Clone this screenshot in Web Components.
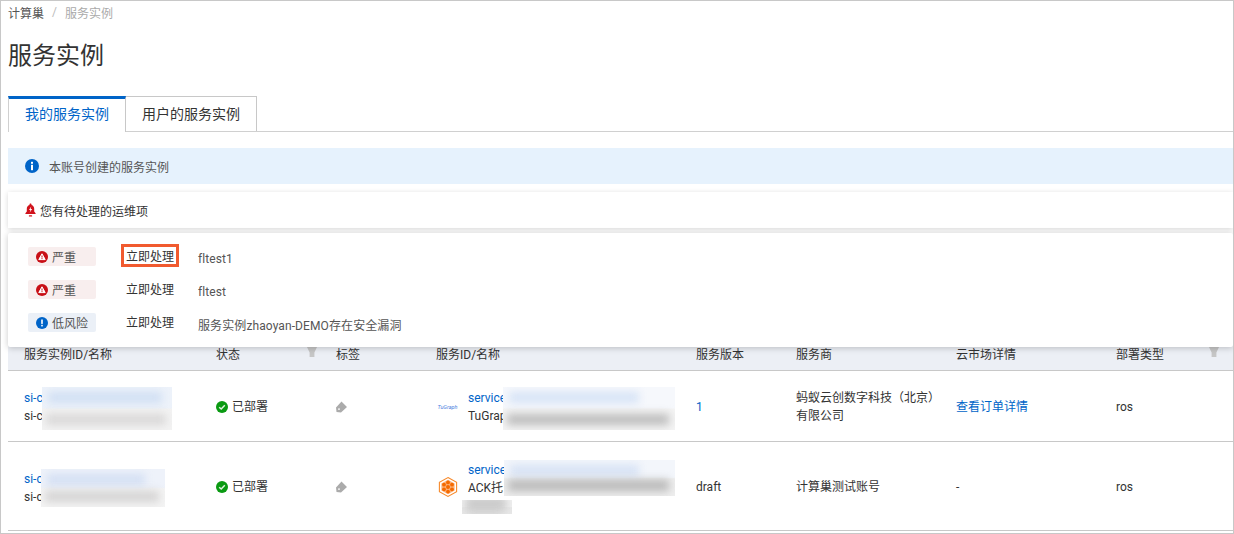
<!DOCTYPE html>
<html lang="zh">
<head>
<meta charset="utf-8">
<title>服务实例</title>
<style>
  html, body { margin: 0; padding: 0; background: #fff; height: 100%; overflow: hidden; }
  body {
    font-family: Roboto, "Noto Sans CJK SC", sans-serif;
    font-size: 12px;
    color: #333;
  }
</style>
</head>
<body>
<console-page>
  <crumb-nav slot="head"><span>计算巢</span></crumb-nav>
  <page-title slot="head">服务实例</page-title>
  <tab-strip slot="head"></tab-strip>
  <info-banner slot="head">本账号创建的服务实例</info-banner>
  <ops-bar slot="head">您有待处理的运维项</ops-bar>
  <ops-panel slot="over">
    <ops-row level="high" boxed>fltest1</ops-row>
    <ops-row level="high">fltest</ops-row>
    <ops-row level="low">服务实例zhaoyan-DEMO存在安全漏洞</ops-row>
  </ops-panel>
  <instance-table></instance-table>
</console-page>

<script>
const ICONS = {
  info: '<svg width="14" height="14" viewBox="0 0 14 14"><circle cx="7" cy="7" r="7" fill="#0064c8"/><rect x="6" y="2.8" width="2" height="2" fill="#fff"/><rect x="6" y="5.8" width="2" height="5.4" fill="#fff"/></svg>',
  bell: '<svg width="11" height="14" viewBox="0 0 11 14"><path d="M5.5 0.6c.6 0 1 .4 1 1v.3c1.8.5 2.7 2 2.7 3.9v2.7l1.4 1.8v.8H.4v-.8l1.4-1.8V5.8c0-1.9.9-3.4 2.7-3.9v-.3c0-.6.4-1 1-1z" fill="#d0121b"/><path d="M6.2 3.6 4 7h1.4l-.7 2.6L7.2 6H5.7z" fill="#fff"/><rect x="3.8" y="12.2" width="3.4" height="1.4" rx=".7" fill="#d0121b"/></svg>',
  severe: '<svg width="12" height="12" viewBox="0 0 12 12"><circle cx="6" cy="6" r="6" fill="#c80f16"/><path d="M6 2.8 9.2 8.6H2.8z" fill="#fff" stroke="#fff" stroke-linejoin="round"/><rect x="5.5" y="4.6" width="1" height="2" fill="#c80f16"/><rect x="5.5" y="7.1" width="1" height="1" fill="#c80f16"/></svg>',
  low: '<svg width="12" height="12" viewBox="0 0 12 12"><circle cx="6" cy="6" r="6" fill="#0064c8"/><rect x="5.2" y="2.5" width="1.6" height="4.4" fill="#fff"/><rect x="5.2" y="7.8" width="1.6" height="1.6" fill="#fff"/></svg>',
  ok: '<svg width="12" height="12" viewBox="0 0 12 12"><circle cx="6" cy="6" r="6" fill="#0a9a12"/><path d="M3.2 6.2 5.2 8 8.8 4.3" fill="none" stroke="#dff3e0" stroke-width="1.5"/></svg>',
  filter: '<svg width="10" height="10" viewBox="0 0 10 10"><path d="M0 0h10L7.4 5.4V10H2.6V5.4z" fill="#c6c6c6"/></svg>',
  tag: '<svg width="12" height="12" viewBox="0 0 12 12"><path fill-rule="evenodd" d="M0 6.5 5.5.5 11 6 5 11.5 .5 11zM3 7.2a.9.9 0 1 0 0 1.8.9.9 0 0 0 0-1.8z" fill="#ababab"/></svg>',
  hex: '<svg width="20" height="20" viewBox="0 0 20 20"><path d="M10 .6 18.6 5.3v9.4L10 19.4 1.4 14.7V5.3z" fill="#fff" stroke="#f78a2c" stroke-width="1.1"/><path d="M10 2.8 16.6 6.5v7L10 17.2 3.4 13.5v-7z" fill="#fbb27a"/><g fill="#f56a00"><circle cx="10" cy="10" r="2"/><circle cx="10" cy="5.4" r="1.9"/><circle cx="10" cy="14.6" r="1.9"/><circle cx="6" cy="7.7" r="1.9"/><circle cx="14" cy="7.7" r="1.9"/><circle cx="6" cy="12.3" r="1.9"/><circle cx="14" cy="12.3" r="1.9"/></g></svg>'
};

// small helper so every element below stays a one-screen class
function define(name, css, html) {
  customElements.define(name, class extends HTMLElement {
    connectedCallback() {
      const root = this.attachShadow({ mode: 'open' });
      root.innerHTML = `<style>${css}</style>${typeof html === 'function' ? html(this) : html}`;
    }
  });
}

define('console-page', `
  :host { display: block; position: relative; box-sizing: border-box; width: 1234px; height: 534px;
          border: 1px solid #c8c8c8; padding-left: 7px; overflow: hidden; }
  .over { position: absolute; left: 7px; right: 0; top: 232px; z-index: 5; }
  .body { margin-top: 111px; }
`, `
  <slot name="head"></slot>
  <div class="over"><slot name="over"></slot></div>
  <div class="body"><slot></slot></div>
`);

define('crumb-nav', `
  :host { display: flex; height: 22px; align-items: center; font-size: 12px; color: #555; }
  i { font-style: normal; color: #bbb; margin: 0 8px 0 8px; }
  b { font-weight: 400; color: #aaa; }
`, `<slot></slot><i>/</i><b>服务实例</b>`);

define('page-title', `
  :host { display: block; font-size: 24px; line-height: 36px; height: 36px; margin-top: 15px; color: #333; }
`, `<slot></slot>`);

define('tab-strip', `
  :host { display: flex; margin-top: 22px; height: 35px; border-bottom: 1px solid #d0d0d0; font-size: 14px; }
  div { box-sizing: border-box; display: flex; align-items: center; justify-content: center; color: #333; }
  .on { width: 118px; height: 36px; padding-bottom: 5px; border-top: 3px solid #0064c8; border-left: 1px solid #d0d0d0; border-right: 1px solid #c8c8c8; background: #fff; color: #0064c8; }
  .off { width: 131px; height: 35px; padding-bottom: 2px; border: 1px solid #c8c8c8; border-left: 0; border-bottom: 0; }
`, `<div class="on">我的服务实例</div><div class="off">用户的服务实例</div>`);

define('info-banner', `
  :host { display: flex; align-items: center; gap: 10px; margin-top: 16px; height: 36px; padding-left: 17px; background: #e6f2fd; font-size: 12px; color: #555; }
  svg { display: block; }
`, `${ICONS.info}<slot></slot>`);

define('ops-bar', `
  :host { display: flex; align-items: center; gap: 4px; margin-top: 8px; height: 36px; padding-left: 17px; background: #fff; font-size: 12px; color: #333;
          box-shadow: 0 1px 5px rgba(0,0,0,.16); }
  svg { display: block; }
`, `${ICONS.bell}<slot></slot>`);

define('ops-panel', `
  :host { display: flex; flex-direction: column; box-sizing: border-box; height: 114px; padding: 9px 0 0 20px; background: #fff; border-radius: 2px;
          box-shadow: 0 1px 6px rgba(0,0,0,.22); }
`, `<slot></slot>`);

define('ops-row', `
  :host { display: flex; align-items: center; height: 33px; font-size: 12px; color: #333; }
  .badge { display: flex; align-items: center; gap: 4px; box-sizing: border-box; width: 68px; height: 19px; padding-left: 8px; border-radius: 2px; color: #555; margin-top: -4px; }
  .high { background: #f8eeee; }
  .low { background: #ebf0f7; }
  svg { display: block; }
  .act { position: relative; margin-left: 30px; width: 48px; margin-top: -4px; color: #333; white-space: nowrap; line-height: 18px; }
  .box { position: absolute; left: -5px; top: -4px; width: 58px; height: 23px; box-sizing: border-box; border: 3px solid #f15a2f; }
  .msg { margin-left: 24px; color: #555; margin-top: 0; letter-spacing: .1px; }
`, el => {
  const low = el.getAttribute('level') === 'low';
  return `<span class="badge ${low ? 'low' : 'high'}">${low ? ICONS.low : ICONS.severe}${low ? '低风险' : '严重'}</span>
    <span class="act">立即处理${el.hasAttribute('boxed') ? '<span class="box"></span>' : ''}</span>
    <span class="msg"><slot></slot></span>`;
});

define('smudge-mark', `
  :host { display: block; position: absolute; overflow: hidden;
          background: linear-gradient(var(--ha, #edf2fa) 48%, var(--hb, #f3f3f3) 52%); }
  .a, .b { position: absolute; height: 11px; filter: blur(4px); }
  .a { top: 5px; left: 6px; right: var(--ar, 10px); background: var(--a, #c9d9f0); }
  .b { bottom: 5px; left: 4px; right: var(--br, 6px); background: var(--b, #cfcfcf); }
`, `<div class="a"></div><div class="b"></div>`);

define('instance-table', `
  :host { display: block; font-size: 12px; color: #333; }
  .grid { display: grid; grid-template-columns: 192px 120px 100px 260px 100px 160px 160px 133px; }
  .th { display: flex; align-items: center; justify-content: space-between; box-sizing: border-box; height: 32px; padding: 0 3px 2px 16px;
        background: #eceff5; border-bottom: 1px solid #c8c8c8; }
  .th span { margin-top: -3px; }
  .th.last { padding-right: 14px; }
  .td { position: relative; display: flex; align-items: center; box-sizing: border-box; padding: 2px 0 0 16px; border-bottom: 1px solid #c8c8c8; line-height: 18px; }
  .r1 { height: 71px; }
  .r2 { height: 89px; }
  a { color: #0064c8; text-decoration: none; }
  svg { display: block; flex: none; }
  .st { gap: 4px; }
  .svc { gap: 10px; }
  .logo { width: 22px; display: flex; justify-content: center; flex: none; padding-left: 1px; box-sizing: border-box; }
  .tu { font-size: 5.5px; font-style: italic; color: #4a7de0; line-height: 8px; white-space: nowrap; }
  .clip { white-space: nowrap; }
  .stack { display: flex; flex-direction: column; }
  .r2 .stack { margin-top: 2px; }
  smudge-mark { z-index: 1; }
`, `<div class="grid">
  <div class="th">服务实例ID/名称</div>
  <div class="th">状态<span>${ICONS.filter}</span></div>
  <div class="th">标签</div>
  <div class="th">服务ID/名称</div>
  <div class="th">服务版本</div>
  <div class="th">服务商</div>
  <div class="th">云市场详情</div>
  <div class="th last">部署类型<span>${ICONS.filter}</span></div>

  <div class="td r1"><div class="stack"><a>si-c</a><span>si-c</span></div>
    <smudge-mark style="left:34px;top:16px;width:130px;height:43px;--a:#d0dff3;--b:#d9d8d8"></smudge-mark></div>
  <div class="td r1 st">${ICONS.ok}<span>已部署</span></div>
  <div class="td r1">${ICONS.tag}</div>
  <div class="td r1 svc"><span class="logo"><span class="tu">TuGraph</span></span><div class="stack"><a>service</a><span class="clip">TuGrap</span></div>
    <smudge-mark style="left:83px;top:16px;width:172px;height:43px;--ha:#f6f8fc;--hb:#f4f4f4;--a:#d6e3f6;--ar:36px;--b:#bcbcbc"></smudge-mark></div>
  <div class="td r1"><a>1</a></div>
  <div class="td r1"><span>蚂蚁云创数字科技（北京）<br>有限公司</span></div>
  <div class="td r1"><a>查看订单详情</a></div>
  <div class="td r1">ros</div>

  <div class="td r2"><div class="stack"><a>si-c</a><span>si-c</span></div>
    <smudge-mark style="left:33px;top:27px;width:124px;height:38px;--ha:#eef2fa;--hb:#f4f4f4;--a:#d3dff3;--ar:20px;--b:#d4d3d3"></smudge-mark></div>
  <div class="td r2 st">${ICONS.ok}<span>已部署</span></div>
  <div class="td r2">${ICONS.tag}</div>
  <div class="td r2 svc"><span class="logo">${ICONS.hex}</span><div class="stack"><a>service</a><span class="clip">ACK托</span><span class="clip">&nbsp;</span></div>
    <smudge-mark style="left:84px;top:18px;width:171px;height:36px;--ha:#f3f6fb;--hb:#eeeeee;--a:#d6e2f5;--ar:36px;--b:#b8b8b8"></smudge-mark>
    <smudge-mark style="left:42px;top:58px;width:50px;height:14px;--ha:#f0f0f0;--hb:#e8e8e8;--a:#d8d8d8;--b:#c6c6c6"></smudge-mark></div>
  <div class="td r2">draft</div>
  <div class="td r2">计算巢测试账号</div>
  <div class="td r2">-</div>
  <div class="td r2">ros</div>
</div>`);
</script>
</body>
</html>
